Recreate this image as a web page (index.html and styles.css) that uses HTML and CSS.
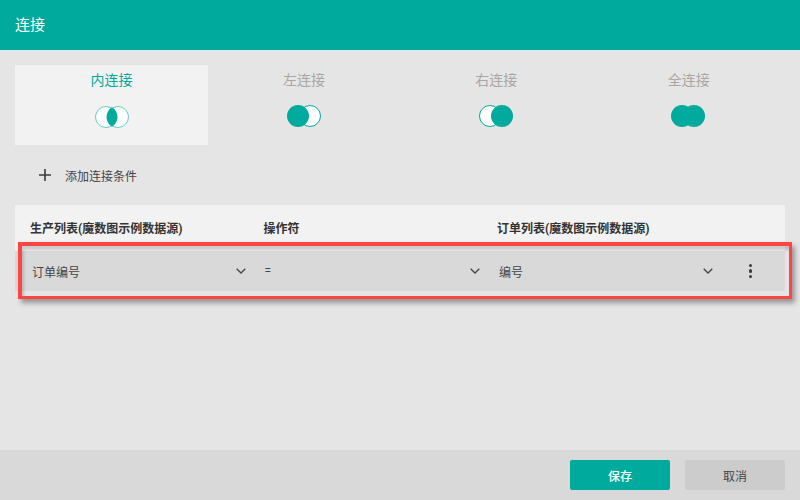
FILE: index.html
```html
<!DOCTYPE html>
<html lang="zh">
<head>
<meta charset="utf-8">
<title>连接</title>
<link rel="stylesheet" href="styles.css">
</head>
<body>
<div class="dialog">
  <header class="header">连接</header>
  <main class="main">
    <div class="tabs">
      <div class="tab active">
        <span class="tab-label">内连接</span>
        <svg class="venn" width="36" height="24" viewBox="0 0 36 24"><circle cx="12" cy="12" r="10.5" fill="#fff" stroke="#66cdc5"/><circle cx="24" cy="12" r="10.5" fill="#fff" stroke="#66cdc5"/><path d="M18 2.2A11.5 11.5 0 0 1 18 21.8A11.5 11.5 0 0 1 18 2.2Z" fill="#00aa9d"/></svg>
      </div>
      <div class="tab">
        <span class="tab-label">左连接</span>
        <svg class="venn" width="36" height="24" viewBox="0 0 36 24"><circle cx="24" cy="12" r="10.5" fill="#fff" stroke="#00aa9d"/><circle cx="12" cy="12" r="11" fill="#00aa9d"/></svg>
      </div>
      <div class="tab">
        <span class="tab-label">右连接</span>
        <svg class="venn" width="36" height="24" viewBox="0 0 36 24"><circle cx="12" cy="12" r="10.5" fill="#fff" stroke="#00aa9d"/><circle cx="24" cy="12" r="11" fill="#00aa9d"/></svg>
      </div>
      <div class="tab">
        <span class="tab-label">全连接</span>
        <svg class="venn" width="36" height="24" viewBox="0 0 36 24"><circle cx="12" cy="12" r="11" fill="#00aa9d"/><circle cx="24" cy="12" r="11" fill="#00aa9d"/></svg>
      </div>
    </div>
    <div class="add">
      <svg class="plus" width="12" height="12" viewBox="0 0 12 12"><path d="M6 0V12M0 6H12" stroke="#3f3a36" stroke-width="1.6"/></svg>
      <span>添加连接条件</span>
    </div>
    <section class="conditions">
      <div class="cond-head">
        <span class="col">生产列表(魔数图示例数据源)</span>
        <span class="col">操作符</span>
        <span class="col">订单列表(魔数图示例数据源)</span>
      </div>
      <div class="cond-row">
        <div class="select"><span>订单编号</span><svg class="chev" width="10" height="6" viewBox="0 0 10 6"><path d="M.7.7 5 5 9.3.7" fill="none" stroke="#444" stroke-width="1.3"/></svg></div>
        <div class="select op"><span>=</span><svg class="chev" width="10" height="6" viewBox="0 0 10 6"><path d="M.7.7 5 5 9.3.7" fill="none" stroke="#444" stroke-width="1.3"/></svg></div>
        <div class="select"><span>编号</span><svg class="chev" width="10" height="6" viewBox="0 0 10 6"><path d="M.7.7 5 5 9.3.7" fill="none" stroke="#444" stroke-width="1.3"/></svg></div>
        <div class="kebab"><i></i><i></i><i></i></div>
      </div>
      <div class="highlight"></div>
    </section>
  </main>
  <footer class="footer">
    <button class="btn primary">保存</button>
    <button class="btn">取消</button>
  </footer>
</div>
</body>
</html>
```
FILE: styles.css
```css
* { box-sizing: border-box; }
html, body { margin: 0; height: 100%; }
body {
  font-family: Roboto, "Noto Sans CJK SC", sans-serif;
  background: #e5e5e5;
  color: #333;
}
.dialog { display: flex; flex-direction: column; height: 500px; overflow: hidden; }
.header {
  height: 50px;
  flex: none;
  background: #00aa9d;
  color: #fff;
  font-size: 15px;
  line-height: 50px;
  padding-left: 15px;
}
.main { flex: 1; padding: 15px 15px 0; }
.tabs { display: grid; grid-template-columns: 193px 192px 192.5px 192.5px; }
.tab {
  height: 80px;
  display: flex;
  flex-direction: column;
  align-items: center;
  padding-top: 5px;
  color: #aaa6a3;
  font-size: 14px;
}
.tab.active { background: #f2f2f2; color: #00aa9d; }
.tab-label { line-height: 20px; }
.venn { margin-top: 14px; margin-left: -1px; display: block; }
.tab.active .venn { margin-top: 15px; margin-left: 1px; }
.add {
  display: flex;
  align-items: center;
  height: 20px;
  margin-top: 20px;
  padding-left: 24px;
  font-size: 12px;
  color: #444;
}
.plus { margin-right: 14px; }
.conditions { position: relative; margin-top: 20px; background: #f2f2f2; }
.cond-head {
  display: grid;
  grid-template-columns: 233.5px 233.5px 1fr;
  height: 46px;
  padding: 14px 0 0 15px;
  font-size: 12px;
  font-weight: 700;
  line-height: 20px;
  color: #333;
}
.cond-row {
  display: grid;
  grid-template-columns: 233.5px 233.5px 233.5px 1fr;
  align-items: center;
  height: 40px;
  padding-left: 17px;
  background: #d9d9d9;
  font-size: 12px;
  color: #444;
}
.select { display: flex; align-items: center; justify-content: space-between; padding-right: 20px; }
.select.op { margin-left: -1px; padding-right: 19px; }
.chev { display: block; }
.kebab { display: flex; flex-direction: column; align-items: center; gap: 2px; margin-left: -16px; }
.kebab i { width: 3.4px; height: 3.4px; border-radius: 50%; background: #3f3a36; display: block; }
.highlight {
  position: absolute;
  left: 3px;
  top: 37px;
  width: 774px;
  height: 57px;
  border-style: solid;
  border-color: #ff4444;
  border-width: 4px 3px 3px 4px;
  box-shadow: 3px 4px 5px rgba(0,0,0,.35), inset 2px 4px 3px rgba(0,0,0,.16);
}
.footer {
  flex: none;
  height: 50px;
  background: #d9d9d9;
  display: flex;
  justify-content: flex-end;
  align-items: center;
  gap: 15px;
  padding-right: 15px;
}
.btn {
  width: 100px;
  height: 30px;
  border: 0;
  border-radius: 2px;
  background: #cccccc;
  color: #444;
  font: 12px Roboto, "Noto Sans CJK SC", sans-serif;
  padding: 0;
}
.btn.primary { background: #00aa9d; color: #fff; font-weight: 500; }
```
